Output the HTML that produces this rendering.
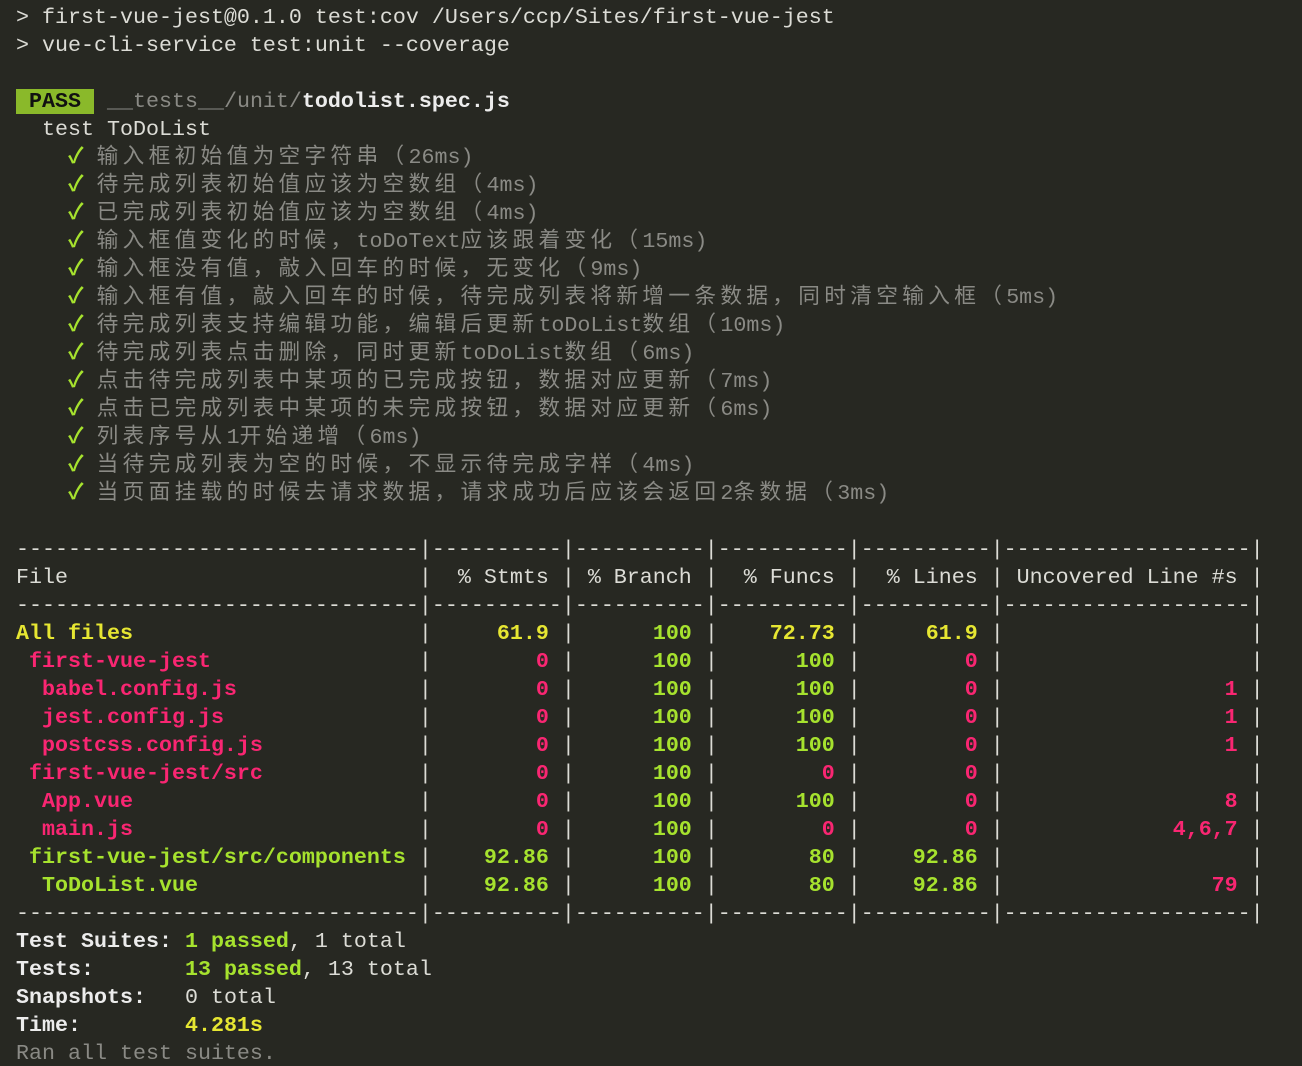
<!DOCTYPE html>
<html><head><meta charset="utf-8"><style>
html,body{margin:0;padding:0;background:#272822;width:1302px;height:1066px;overflow:hidden}
pre{margin:0;padding:4px 0 0 16px;font-family:"Liberation Mono","Noto Sans CJK SC",monospace;font-size:21.67px;line-height:28px;color:#dcdcd6;white-space:pre}
b{font-weight:bold}
.g{color:#a6e22e}.y{color:#e6e632}.p{color:#f92672}.d{color:#8a8a85}.w{color:#ececec}
.c{letter-spacing:4.33px;font-family:"Noto Sans CJK SC",sans-serif;line-height:20px}
.k{line-height:20px;font-weight:bold}
.pass{background:#8ab92a;color:#111;font-weight:bold}
</style></head><body><pre>&gt; first-vue-jest@0.1.0 test:cov /Users/ccp/Sites/first-vue-jest
&gt; vue-cli-service test:unit --coverage

<span class="pass"> PASS </span> <span class="d">__tests__/unit/</span><b class="w">todolist.spec.js</b>
  test ToDoList
    <span class="g k">✓</span> <span class="d"><span class="c">输入框初始值为空字符串（</span>26ms)</span>
    <span class="g k">✓</span> <span class="d"><span class="c">待完成列表初始值应该为空数组（</span>4ms)</span>
    <span class="g k">✓</span> <span class="d"><span class="c">已完成列表初始值应该为空数组（</span>4ms)</span>
    <span class="g k">✓</span> <span class="d"><span class="c">输入框值变化的时候，</span>toDoText<span class="c">应该跟着变化（</span>15ms)</span>
    <span class="g k">✓</span> <span class="d"><span class="c">输入框没有值，敲入回车的时候，无变化（</span>9ms)</span>
    <span class="g k">✓</span> <span class="d"><span class="c">输入框有值，敲入回车的时候，待完成列表将新增一条数据，同时清空输入框（</span>5ms)</span>
    <span class="g k">✓</span> <span class="d"><span class="c">待完成列表支持编辑功能，编辑后更新</span>toDoList<span class="c">数组（</span>10ms)</span>
    <span class="g k">✓</span> <span class="d"><span class="c">待完成列表点击删除，同时更新</span>toDoList<span class="c">数组（</span>6ms)</span>
    <span class="g k">✓</span> <span class="d"><span class="c">点击待完成列表中某项的已完成按钮，数据对应更新（</span>7ms)</span>
    <span class="g k">✓</span> <span class="d"><span class="c">点击已完成列表中某项的未完成按钮，数据对应更新（</span>6ms)</span>
    <span class="g k">✓</span> <span class="d"><span class="c">列表序号从</span>1<span class="c">开始递增（</span>6ms)</span>
    <span class="g k">✓</span> <span class="d"><span class="c">当待完成列表为空的时候，不显示待完成字样（</span>4ms)</span>
    <span class="g k">✓</span> <span class="d"><span class="c">当页面挂载的时候去请求数据，请求成功后应该会返回</span>2<span class="c">条数据（</span>3ms)</span>

-------------------------------|----------|----------|----------|----------|-------------------|
File                           |  % Stmts | % Branch |  % Funcs |  % Lines | Uncovered Line #s |
-------------------------------|----------|----------|----------|----------|-------------------|
<b class="y">All files                      </b>|<b class="y">     61.9 </b>|<b class="g">      100 </b>|<b class="y">    72.73 </b>|<b class="y">     61.9 </b>|                   |
<b class="p"> first-vue-jest                </b>|<b class="p">        0 </b>|<b class="g">      100 </b>|<b class="g">      100 </b>|<b class="p">        0 </b>|                   |
<b class="p">  babel.config.js              </b>|<b class="p">        0 </b>|<b class="g">      100 </b>|<b class="g">      100 </b>|<b class="p">        0 </b>|<b class="p">                 1 </b>|
<b class="p">  jest.config.js               </b>|<b class="p">        0 </b>|<b class="g">      100 </b>|<b class="g">      100 </b>|<b class="p">        0 </b>|<b class="p">                 1 </b>|
<b class="p">  postcss.config.js            </b>|<b class="p">        0 </b>|<b class="g">      100 </b>|<b class="g">      100 </b>|<b class="p">        0 </b>|<b class="p">                 1 </b>|
<b class="p"> first-vue-jest/src            </b>|<b class="p">        0 </b>|<b class="g">      100 </b>|<b class="p">        0 </b>|<b class="p">        0 </b>|                   |
<b class="p">  App.vue                      </b>|<b class="p">        0 </b>|<b class="g">      100 </b>|<b class="g">      100 </b>|<b class="p">        0 </b>|<b class="p">                 8 </b>|
<b class="p">  main.js                      </b>|<b class="p">        0 </b>|<b class="g">      100 </b>|<b class="p">        0 </b>|<b class="p">        0 </b>|<b class="p">             4,6,7 </b>|
<b class="g"> first-vue-jest/src/components </b>|<b class="g">    92.86 </b>|<b class="g">      100 </b>|<b class="g">       80 </b>|<b class="g">    92.86 </b>|                   |
<b class="g">  ToDoList.vue                 </b>|<b class="g">    92.86 </b>|<b class="g">      100 </b>|<b class="g">       80 </b>|<b class="g">    92.86 </b>|<b class="p">                79 </b>|
-------------------------------|----------|----------|----------|----------|-------------------|
<b class="w">Test Suites: </b><b class="g">1 passed</b>, 1 total
<b class="w">Tests:       </b><b class="g">13 passed</b>, 13 total
<b class="w">Snapshots:   </b>0 total
<b class="w">Time:        </b><b class="y">4.281s</b>
<span class="d">Ran all test suites.</span></pre></body></html>
